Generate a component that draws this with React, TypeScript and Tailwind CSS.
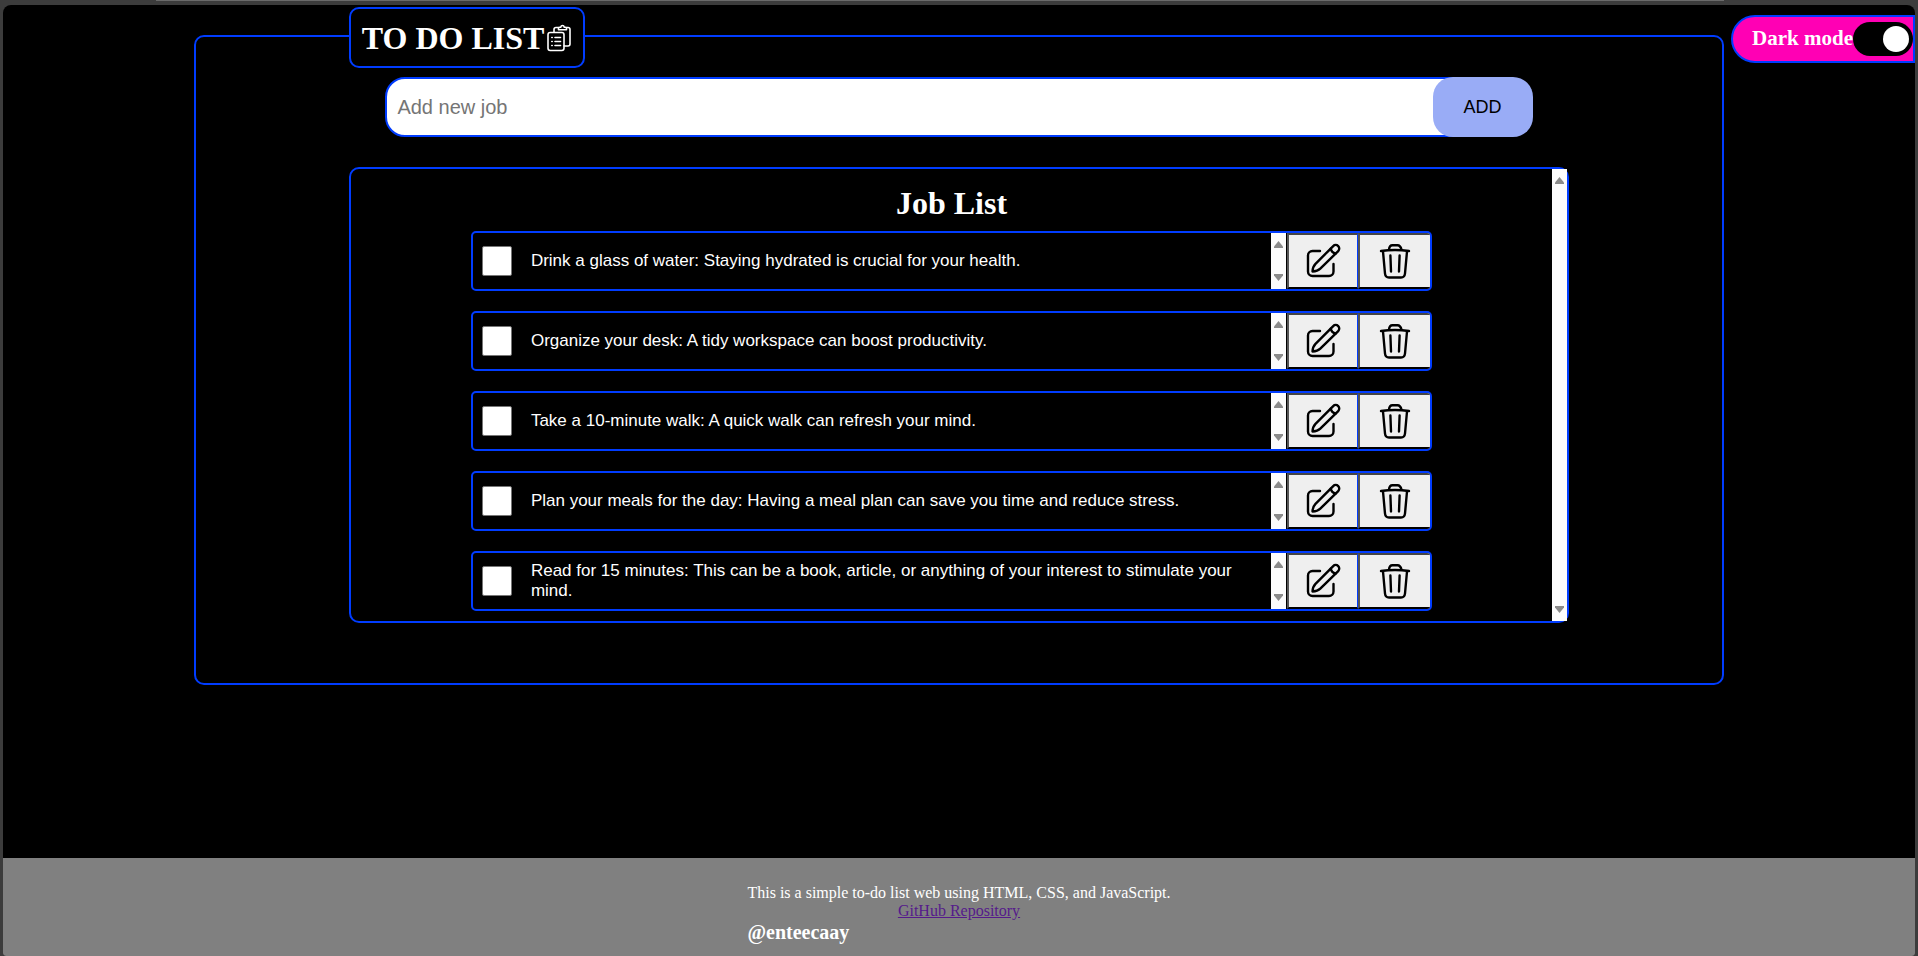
import { useState } from "react";

const initialJobs = [
  "Drink a glass of water: Staying hydrated is crucial for your health.",
  "Organize your desk: A tidy workspace can boost productivity.",
  "Take a 10-minute walk: A quick walk can refresh your mind.",
  "Plan your meals for the day: Having a meal plan can save you time and reduce stress.",
  "Read for 15 minutes: This can be a book, article, or anything of your interest to stimulate your mind.",
];

function ClipboardIcon() {
  return (
    <svg viewBox="0 0 24 28" className="h-7 w-6" fill="none" stroke="currentColor" strokeWidth="1.6" strokeLinecap="round" strokeLinejoin="round" aria-hidden="true">
      <path d="M7 8V5.500a2 2 0 0 1 2-2h2.500M19.500 3.500h1.500a2 2 0 0 1 2 2V20a2 2 0 0 1-2 2h-4" />
      <path d="M11.500 5.800V4.200a1 1 0 0 1 1-1h1.200c.3-1.200.8-1.700 1.800-1.700s1.500.5 1.800 1.700h1.200a1 1 0 0 1 1 1V5.800z" />
      <rect x="1" y="8.500" width="16" height="18" rx="2.200" />
      <path d="M8 13.500h5.500M8 17.500h5.500M8 21.500h5.500M4.800 13.500h.4M4.800 17.500h.4M4.800 21.500h.4" />
    </svg>
  );
}

function EditIcon() {
  return (
    <svg viewBox="0 0 36 36" className="size-9" fill="none" stroke="currentColor" strokeWidth="2.400" strokeLinecap="round" strokeLinejoin="round" aria-hidden="true">
      <path d="M15 8H7.500a4.500 4.500 0 0 0-4.500 4.500v16a4.500 4.500 0 0 0 4.500 4.500h16.500a4.500 4.500 0 0 0 4.500-4.500V21" />
      <path d="M7.500 28.500C7.600 25.500 8.300 23 10.500 20.800L28.200 3.100a3.500 3.500 0 0 1 5 5L15.300 25.700C13.200 27.800 10.500 28.400 7.500 28.500z" />
      <path d="M25.700 5.600c.5 2.500 2.300 4.400 5 5" />
    </svg>
  );
}

function TrashIcon() {
  return (
    <svg viewBox="0 0 36 36" className="size-9" fill="none" stroke="currentColor" strokeWidth="2.400" strokeLinecap="round" strokeLinejoin="round" aria-hidden="true">
      <path d="M4 8C13 6.800 23 6.800 32 8" />
      <path d="M12 6.800C12.200 3.500 13 2.200 15.500 2.200h5C23 2.200 23.800 3.500 24.500 6.800" />
      <path d="M6 8.500L8 30.500c.3 3 1.200 4 4 4h12c2.800 0 3.700-1 4-4L30 8.500" />
      <path d="M13.400 12.500l.6 16M22.600 12.500l-.6 16" />
    </svg>
  );
}

function ScrollTrack() {
  return (
    <div className="flex w-[15px] shrink-0 flex-col items-center justify-between self-stretch bg-[#fcfcfc] py-2 text-[#8b8b8b]" aria-hidden="true">
      <svg viewBox="0 0 9 7" className="h-[7px] w-[9px]" fill="currentColor">
        <path d="M4.500 0L9 5.500V7H0V5.500z" />
      </svg>
      <svg viewBox="0 0 9 7" className="h-[7px] w-[9px]" fill="currentColor">
        <path d="M0 0h9v1.500L4.500 7L0 1.500z" />
      </svg>
    </div>
  );
}

function JobRow({ id, text }: { id: string; text: string }) {
  return (
    <li className="flex h-[60px] items-center overflow-hidden rounded-[5px] border-2 border-[#003cff]">
      <input
        id={id}
        type="checkbox"
        className="ml-[9px] size-[30px] shrink-0 appearance-none rounded-[2px] border border-[#767676] bg-white checked:bg-[#003cff]"
      />
      <label htmlFor={id} className="ml-[19px] flex-1 pr-5 font-['Liberation_Sans',sans-serif] text-[17px] leading-5">
        {text}
      </label>
      <ScrollTrack />
      <div className="ml-px flex self-stretch text-black">
        <button type="button" aria-label="Edit job" className="flex w-[71px] items-center justify-center border-2 border-r border-t-[#444] border-r-[#003cff] border-b-black border-l-[#555] bg-[#efefef]">
          <EditIcon />
        </button>
        <button type="button" aria-label="Delete job" className="flex w-[72px] items-center justify-center border-2 border-r-0 border-t-[#444] border-b-black border-l-[#555] bg-[#efefef]">
          <TrashIcon />
        </button>
      </div>
    </li>
  );
}

export default function App() {
  const [dark, setDark] = useState(true);
  const [jobs, setJobs] = useState(initialJobs);
  const [draft, setDraft] = useState("");

  return (
    <div className="flex min-h-screen flex-col bg-[#3c3c3c] px-[3px] font-['Liberation_Serif',serif] text-white">
      <div className="mr-[10%] ml-[8%] h-px bg-[#6a6a6a]" />
      <div className="relative mt-1 flex flex-1 flex-col overflow-hidden rounded-t-lg rounded-b-[3px] bg-black">
        <label className="absolute top-[10px] right-0 flex h-12 items-center rounded-l-full border-2 border-[#003cff] bg-[#ff00b4] pl-[19px] text-[21px] font-bold">
          Dark mode
          <input type="checkbox" role="switch" className="peer sr-only" checked={dark} onChange={(e) => setDark(e.target.checked)} />
          <span className="flex h-[34px] w-[60px] items-center rounded-full bg-black px-1 peer-checked:justify-end">
            <span className="size-[26px] rounded-full bg-white" />
          </span>
        </label>

        <main className="mx-auto mt-[30px] mb-8 w-4/5 rounded-[10px] border-2 border-[#003cff] pb-[60px]">
          <div className="mx-auto -mt-[30px] w-4/5">
            <h1 className="flex h-[61px] w-fit items-center gap-[3px] rounded-[10px] border-2 border-[#003cff] bg-black pr-3 pl-[11px] text-[32px] font-bold">
              TO DO LIST
              <ClipboardIcon />
            </h1>

            <form
              className="mx-auto mt-[9px] flex h-[60px] w-[94%]"
              onSubmit={(e) => {
                e.preventDefault();
                if (draft.trim()) setJobs([...jobs, draft.trim()]);
                setDraft("");
              }}
            >
              <input
                type="text"
                aria-label="Add new job"
                placeholder="Add new job"
                value={draft}
                onChange={(e) => setDraft(e.target.value)}
                className="min-w-0 flex-1 rounded-l-[20px] border-2 border-[#003cff] bg-white pr-8 pl-[10px] font-['Liberation_Sans',sans-serif] text-xl text-black outline-none placeholder:text-[#757575]"
              />
              <button type="submit" className="relative -ml-5 w-[100px] rounded-[20px] bg-[#99acf6] font-['Liberation_Sans',sans-serif] text-lg text-black">
                ADD
              </button>
            </form>

            <section className="mt-[30px] flex rounded-[10px] border-2 border-[#003cff]">
              <div className="flex-1 pb-[10px]">
                <h2 className="pt-4 pb-[10px] text-center text-[32px] leading-9 font-bold">Job List</h2>
                <ul className="mx-auto flex w-4/5 flex-col gap-5">
                  {jobs.map((job, i) => (
                    <JobRow key={i} id={`job-${i}`} text={job} />
                  ))}
                </ul>
              </div>
              <ScrollTrack />
            </section>
          </div>
        </main>

        <footer className="mt-auto flex h-[98px] justify-center bg-[#808080] pt-[26px]">
          <div className="flex flex-col text-base leading-[18px]">
            <p>This is a simple to-do list web using HTML, CSS, and JavaScript.</p>
            <a href="#repository" className="self-center text-[#551a8b] underline">
              GitHub Repository
            </a>
            <h3 className="mt-[2px] text-xl leading-5 font-bold">@enteecaay</h3>
          </div>
        </footer>
      </div>
    </div>
  );
}
